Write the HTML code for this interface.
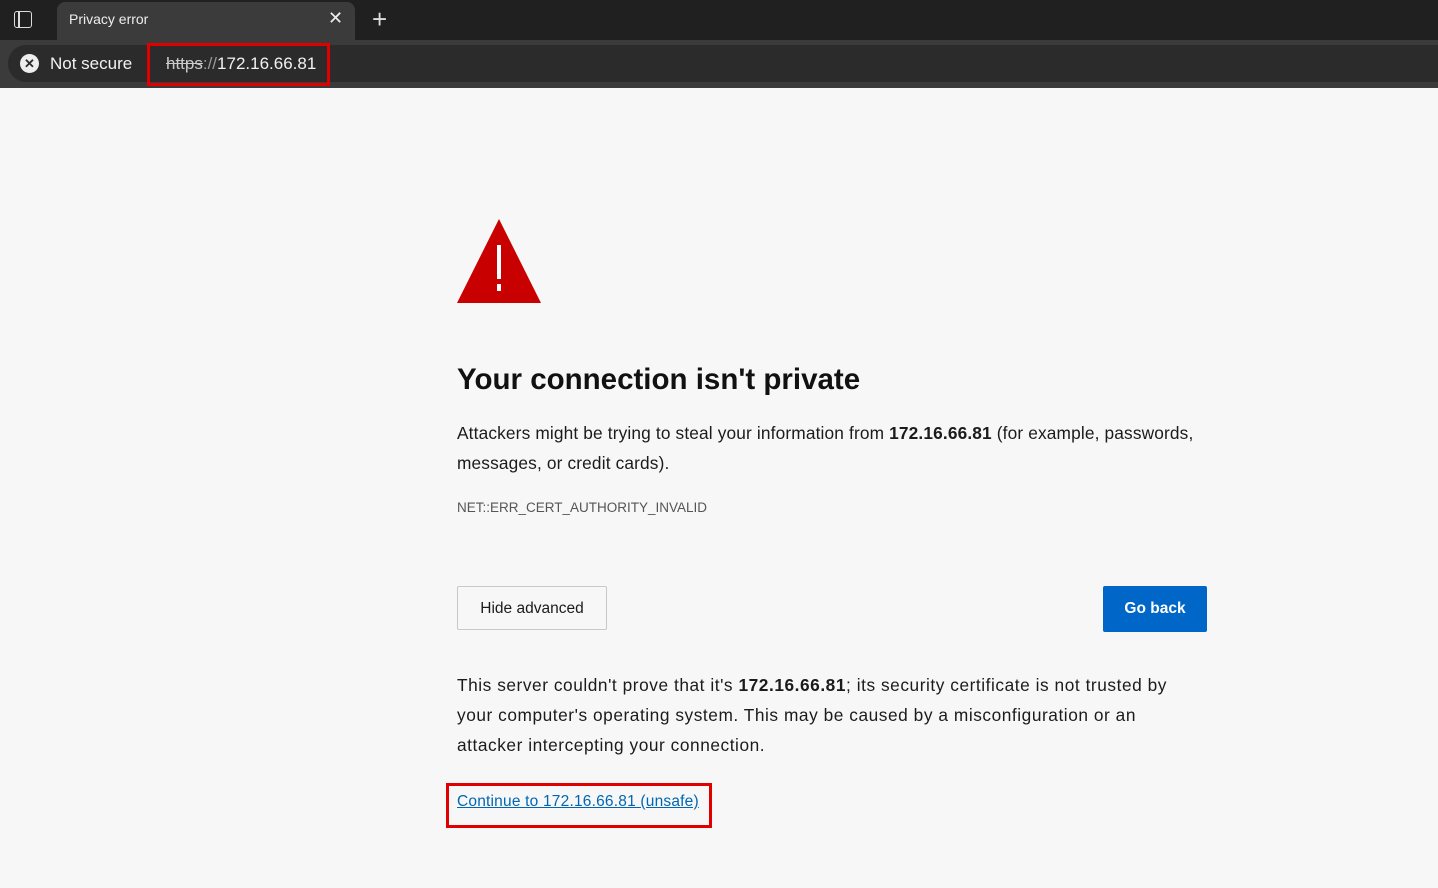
<!DOCTYPE html>
<html><head><style>
*{margin:0;padding:0;box-sizing:border-box}
body{width:1438px;height:888px;background:#f7f7f7;font-family:"Liberation Sans",sans-serif;position:relative;overflow:hidden;color:#1b1b1b}
.abs{position:absolute}
</style></head><body>
<div class="abs" style="left:0;top:0;width:1438px;height:40px;background:#202020"></div>
<div class="abs" style="left:14px;top:11px;width:18px;height:17px;border:1.6px solid #ddd;border-radius:3px"></div>
<div class="abs" style="left:18px;top:12px;width:1.6px;height:15px;background:#ddd"></div>
<div class="abs" style="left:57px;top:2px;width:298px;height:40px;background:#3b3b3b;border-radius:8px 8px 0 0"></div>
<div class="abs" style="left:69px;top:11px;font-size:14px;color:#eee">Privacy error</div>
<div class="abs" style="left:328px;top:8px;font-size:18px;color:#eee">✕</div>
<div class="abs" style="left:372px;top:4px;font-size:26px;color:#ddd;font-weight:300">+</div>
<div class="abs" style="left:0;top:40px;width:1438px;height:48px;background:#3b3b3b"></div>
<div class="abs" style="left:8px;top:45px;width:1430px;height:37px;background:#2b2b2b;border-radius:18px 0 0 18px"></div>
<div class="abs" style="left:20px;top:54px;width:19px;height:19px;border-radius:50%;background:#eee;color:#2b2b2b;font-size:13px;font-weight:bold;text-align:center;line-height:19px">✕</div>
<div class="abs" style="left:50px;top:54px;font-size:17px;color:#f2f2f2">Not secure</div>
<div class="abs" style="left:147px;top:43px;width:183px;height:43px;border:3px solid #e00000"></div>
<div class="abs" style="left:166px;top:54px;font-size:17px;color:#f2f2f2"><span style="text-decoration:line-through;color:#ccc">https</span><span style="color:#999">://</span>172.16.66.81</div>

<svg class="abs" style="left:457px;top:219px" width="85" height="85" viewBox="0 0 85 85"><polygon points="42,0 84,84 0,84" fill="#c80000"/><rect x="40" y="26" width="4" height="34" fill="#fff"/><rect x="40" y="65" width="4" height="7" fill="#fff"/></svg>
<div class="abs" style="left:457px;top:363px;font-size:29.5px;font-weight:bold;color:#111">Your connection isn't private</div>
<div class="abs" style="left:457px;top:418px;width:800px;font-size:17.3px;line-height:30px;letter-spacing:0.15px;white-space:nowrap">Attackers might be trying to steal your information from <b>172.16.66.81</b> (for example, passwords,<br>messages, or credit cards).</div>
<div class="abs" style="left:457px;top:500px;font-size:13.5px;color:#555">NET::ERR_CERT_AUTHORITY_INVALID</div>
<div class="abs" style="left:457px;top:586px;width:150px;height:44px;border:1px solid #c8c8c8;border-radius:2px;background:#f7f7f7;font-size:15.5px;text-align:center;line-height:44px">Hide advanced</div>
<div class="abs" style="left:1103px;top:586px;width:104px;height:46px;background:#0066c8;border-radius:2px;color:#fff;font-size:15.5px;font-weight:bold;text-align:center;line-height:46px">Go back</div>
<div class="abs" style="left:457px;top:670px;width:800px;font-size:17.3px;line-height:30px;letter-spacing:0.55px;white-space:nowrap">This server couldn't prove that it's <b>172.16.66.81</b>; its security certificate is not trusted by<br>your computer's operating system. This may be caused by a misconfiguration or an<br>attacker intercepting your connection.</div>
<div class="abs" style="left:446px;top:783px;width:266px;height:45px;border:3px solid #e00000"></div>
<div class="abs" style="left:457px;top:793px;font-size:15.5px;letter-spacing:0.2px;color:#0066b4;text-decoration:underline">Continue to 172.16.66.81 (unsafe)</div>
</body></html>
